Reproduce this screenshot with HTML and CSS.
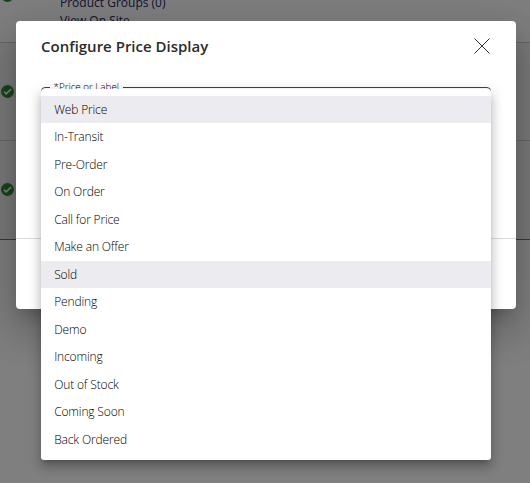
FILE: index.html
```html
<!doctype html>
<html lang="en">
  <head>
    <meta charset="UTF-8" />
    <meta name="viewport" content="width=device-width, initial-scale=1.0" />
    <title>Configure Price Display</title>
    <link rel="stylesheet" href="styles.css">
  </head>
  <body>
    <main class="page">
      <div class="row row-links">
        <svg class="check check-top" viewBox="0 0 24 24"><circle cx="12" cy="12" r="12" /><path d="M5.500 12.500l4 4 9-9" /></svg>
        <div class="links">
          <a>Product Groups (0)</a>
          <a>View On Site</a>
        </div>
      </div>
      <div class="row row-item">
        <svg class="check" viewBox="0 0 24 24"><circle cx="12" cy="12" r="12" /><path d="M5.500 12.500l4 4 9-9" /></svg>
      </div>
      <div class="row row-item">
        <svg class="check" viewBox="0 0 24 24"><circle cx="12" cy="12" r="12" /><path d="M5.500 12.500l4 4 9-9" /></svg>
      </div>
    </main>

    <div class="backdrop">
      <div class="dialog" role="dialog" aria-labelledby="dialogTitle">
        <div class="dialog-header">
          <h2 id="dialogTitle" class="dialog-title">Configure Price Display</h2>
          <svg class="close" viewBox="0 0 16 16"><path d="M.5.5l15 15M15.500.5l-15 15" /></svg>
        </div>
        <div class="dialog-content">
          <fieldset class="select">
            <legend>*Price or Label</legend>
          </fieldset>
          <ul class="menu" role="listbox">
            <li class="menu-item active">Web Price</li>
            <li class="menu-item">In-Transit</li>
            <li class="menu-item">Pre-Order</li>
            <li class="menu-item">On Order</li>
            <li class="menu-item">Call for Price</li>
            <li class="menu-item">Make an Offer</li>
            <li class="menu-item active">Sold</li>
            <li class="menu-item">Pending</li>
            <li class="menu-item">Demo</li>
            <li class="menu-item">Incoming</li>
            <li class="menu-item">Out of Stock</li>
            <li class="menu-item">Coming Soon</li>
            <li class="menu-item">Back Ordered</li>
          </ul>
        </div>
        <div class="dialog-actions"></div>
      </div>
    </div>
  </body>
</html>
```

FILE: styles.css
```css
* {
  margin: 0;
  padding: 0;
  box-sizing: border-box;
}

body {
  height: 483px;
  overflow: hidden;
  font-family: "Open Sans", sans-serif;
  font-size: 12px;
  color: #000;
  background: #fff;
}

.row {
  display: flex;
  height: 98px;
  border-bottom: 1px solid #d0d0d0;
}

.row-links {
  height: 43px;
}

.row-item {
  align-items: center;
  padding-left: 1px;
  background: #f5f5f5;
}

.row-item:last-child {
  height: 99px;
  padding-bottom: 1px;
  border-color: #777;
}

.check {
  width: 13px;
  height: 13px;
  fill: #2b8f36;
}

.check path {
  fill: none;
  stroke: #fff;
  stroke-width: 3;
}

.check-top {
  margin: -11px 0 0 1px;
}

.links {
  display: flex;
  flex-direction: column;
  margin: -6px 0 0 46px;
  font-weight: 500;
  line-height: 18px;
  color: #2a2468;
}

.backdrop {
  position: absolute;
  inset: 0;
  padding: 21px 14px 0 16px;
  background: rgba(0, 0, 0, 0.5);
}

.dialog {
  display: flex;
  flex-direction: column;
  height: 288px;
  background: #fff;
  border-radius: 4px;
  box-shadow:
    0 11px 15px -7px rgba(0, 0, 0, 0.2),
    0 24px 38px 3px rgba(0, 0, 0, 0.14),
    0 9px 46px 8px rgba(0, 0, 0, 0.12);
}

.dialog-header {
  display: flex;
  justify-content: space-between;
  align-items: center;
  height: 50px;
  padding: 0 26px 0 25px;
}

.dialog-title {
  font-size: 15px;
  font-weight: 600;
  color: #2b2b2b;
}

.close {
  width: 16px;
  height: 16px;
  fill: none;
  stroke: #333;
}

.dialog-content {
  position: relative;
  flex: 1;
  padding: 10px 25px 0;
}

.select {
  height: 40px;
  padding-left: 8px;
  border: 1px solid #3f3a73;
  border-radius: 4px;
}

.select legend {
  padding: 0 4px 0 3.5px;
  font-size: 9.8px;
  font-weight: 300;
  line-height: 12px;
}

.menu {
  position: absolute;
  top: 17.7px;
  left: 25px;
  right: 25px;
  padding: 7px 0 6.5px;
  list-style: none;
  background: #fff;
  border-radius: 3px;
  box-shadow:
    0 5px 5px -3px rgba(0, 0, 0, 0.2),
    0 8px 10px 1px rgba(0, 0, 0, 0.14),
    0 3px 14px 2px rgba(0, 0, 0, 0.12);
}

.menu-item {
  height: 27.5px;
  padding-left: 13.2px;
  font-weight: 300;
  line-height: 27.5px;
  letter-spacing: -0.15px;
}

.menu-item.active {
  background: #ebebf0;
}

.dialog-actions {
  height: 71px;
  border-top: 1px solid #d9d9d9;
}
```
